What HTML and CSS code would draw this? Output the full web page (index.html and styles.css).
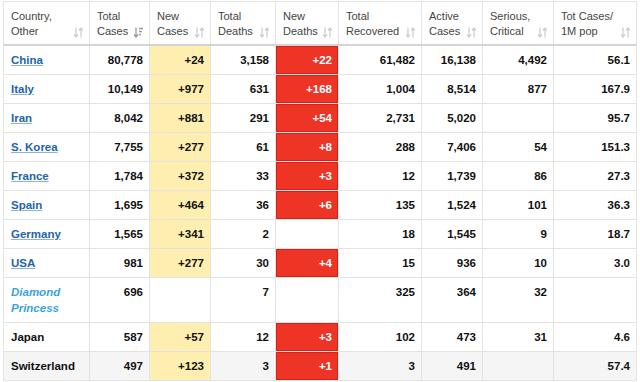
FILE: index.html
```html
<!DOCTYPE html>
<html lang="en">
<head>
    <meta charset="UTF-8">
    <title>Coronavirus Cases</title>
    <link rel="stylesheet" href="styles.css">
</head>
<body>

<table class="cases">
    <colgroup>
        <col class="c-country">
        <col class="c-total">
        <col class="c-new">
        <col class="c-deaths">
        <col class="c-newdeaths">
        <col class="c-recovered">
        <col class="c-active">
        <col class="c-serious">
        <col class="c-pop">
    </colgroup>
    <thead>
        <tr>
            <th><div class="head">Country,<br>Other<svg class="sort" viewBox="0 0 9 10"><path d="M2 0v9M0 7l2 2.5L4 7M7 10V1M5 3l2-2.5L9 3"/></svg></div></th>
            <th><div class="head">Total<br>Cases<svg class="sort active" viewBox="0 0 9 10"><path d="M2 0v9M0 7l2 2.5L4 7M5 1h4M5 4h3M5 7h2"/></svg></div></th>
            <th><div class="head">New<br>Cases<svg class="sort" viewBox="0 0 9 10"><path d="M2 0v9M0 7l2 2.5L4 7M7 10V1M5 3l2-2.5L9 3"/></svg></div></th>
            <th><div class="head">Total<br>Deaths<svg class="sort" viewBox="0 0 9 10"><path d="M2 0v9M0 7l2 2.5L4 7M7 10V1M5 3l2-2.5L9 3"/></svg></div></th>
            <th><div class="head">New<br>Deaths<svg class="sort" viewBox="0 0 9 10"><path d="M2 0v9M0 7l2 2.5L4 7M7 10V1M5 3l2-2.5L9 3"/></svg></div></th>
            <th><div class="head">Total<br>Recovered<svg class="sort" viewBox="0 0 9 10"><path d="M2 0v9M0 7l2 2.5L4 7M7 10V1M5 3l2-2.5L9 3"/></svg></div></th>
            <th><div class="head">Active<br>Cases<svg class="sort" viewBox="0 0 9 10"><path d="M2 0v9M0 7l2 2.5L4 7M7 10V1M5 3l2-2.5L9 3"/></svg></div></th>
            <th><div class="head">Serious,<br>Critical<svg class="sort" viewBox="0 0 9 10"><path d="M2 0v9M0 7l2 2.5L4 7M7 10V1M5 3l2-2.5L9 3"/></svg></div></th>
            <th><div class="head">Tot&nbsp;Cases/<br>1M pop<svg class="sort" viewBox="0 0 9 10"><path d="M2 0v9M0 7l2 2.5L4 7M7 10V1M5 3l2-2.5L9 3"/></svg></div></th>
        </tr>
    </thead>
    <tbody>
        <tr>
            <td><a href="#">China</a></td>
            <td>80,778</td>
            <td class="new">+24</td>
            <td>3,158</td>
            <td class="dead">+22</td>
            <td>61,482</td>
            <td>16,138</td>
            <td>4,492</td>
            <td>56.1</td>
        </tr>
        <tr>
            <td><a href="#">Italy</a></td>
            <td>10,149</td>
            <td class="new">+977</td>
            <td>631</td>
            <td class="dead">+168</td>
            <td>1,004</td>
            <td>8,514</td>
            <td>877</td>
            <td>167.9</td>
        </tr>
        <tr>
            <td><a href="#">Iran</a></td>
            <td>8,042</td>
            <td class="new">+881</td>
            <td>291</td>
            <td class="dead">+54</td>
            <td>2,731</td>
            <td>5,020</td>
            <td></td>
            <td>95.7</td>
        </tr>
        <tr>
            <td><a href="#">S. Korea</a></td>
            <td>7,755</td>
            <td class="new">+277</td>
            <td>61</td>
            <td class="dead">+8</td>
            <td>288</td>
            <td>7,406</td>
            <td>54</td>
            <td>151.3</td>
        </tr>
        <tr>
            <td><a href="#">France</a></td>
            <td>1,784</td>
            <td class="new">+372</td>
            <td>33</td>
            <td class="dead">+3</td>
            <td>12</td>
            <td>1,739</td>
            <td>86</td>
            <td>27.3</td>
        </tr>
        <tr>
            <td><a href="#">Spain</a></td>
            <td>1,695</td>
            <td class="new">+464</td>
            <td>36</td>
            <td class="dead">+6</td>
            <td>135</td>
            <td>1,524</td>
            <td>101</td>
            <td>36.3</td>
        </tr>
        <tr>
            <td><a href="#">Germany</a></td>
            <td>1,565</td>
            <td class="new">+341</td>
            <td>2</td>
            <td></td>
            <td>18</td>
            <td>1,545</td>
            <td>9</td>
            <td>18.7</td>
        </tr>
        <tr>
            <td><a href="#">USA</a></td>
            <td>981</td>
            <td class="new">+277</td>
            <td>30</td>
            <td class="dead">+4</td>
            <td>15</td>
            <td>936</td>
            <td>10</td>
            <td>3.0</td>
        </tr>
        <tr class="tall">
            <td><span class="ship">Diamond Princess</span></td>
            <td>696</td>
            <td></td>
            <td>7</td>
            <td></td>
            <td>325</td>
            <td>364</td>
            <td>32</td>
            <td></td>
        </tr>
        <tr>
            <td>Japan</td>
            <td>587</td>
            <td class="new">+57</td>
            <td>12</td>
            <td class="dead">+3</td>
            <td>102</td>
            <td>473</td>
            <td>31</td>
            <td>4.6</td>
        </tr>
        <tr class="hover">
            <td>Switzerland</td>
            <td>497</td>
            <td class="new">+123</td>
            <td>3</td>
            <td class="dead">+1</td>
            <td>3</td>
            <td>491</td>
            <td></td>
            <td>57.4</td>
        </tr>
    </tbody>
</table>

</body>
</html>
```

FILE: styles.css
```css
* {
    box-sizing: border-box;
}

body {
    margin: 0;
    padding: 1px 0 0 3px;
    background: #fff;
    font-family: 'Liberation Sans', Arial, sans-serif;
    color: #111;
}

.cases {
    border-collapse: collapse;
    table-layout: fixed;
    width: 633px;
}

.c-country { width: 86px; }
.c-total { width: 60px; }
.c-new { width: 61px; }
.c-deaths { width: 65px; }
.c-newdeaths { width: 63px; }
.c-recovered { width: 83px; }
.c-active { width: 61px; }
.c-serious { width: 71px; }
.c-pop { width: 83px; }

th, td {
    border: 1px solid #e3e3e3;
}

th {
    height: 43px;
    padding: 7px 6px 5px 7px;
    border-bottom: 2px solid #d4d4d4;
    font-size: 11px;
    font-weight: normal;
    line-height: 15px;
    color: #444;
    text-align: left;
    vertical-align: top;
}

.head {
    position: relative;
    padding-right: 12px;
    white-space: nowrap;
}

.sort {
    position: absolute;
    right: 0;
    bottom: 1px;
    width: 9px;
    height: 11px;
    fill: none;
    stroke: #cfcfcf;
    stroke-width: 1.3;
}

.sort.active {
    stroke: #999;
}

td {
    height: 29px;
    padding: 6px 6px 6px 7px;
    font-size: 11.5px;
    font-weight: bold;
    line-height: 16px;
    text-align: right;
    vertical-align: top;
}

td:first-child {
    text-align: left;
}

td a {
    color: #2364ad;
    text-decoration: underline;
    text-decoration-color: #8fb2d8;
}

.ship {
    color: #3aa2e4;
    font-style: italic;
}

.tall td {
    height: 43px;
}

.hover td {
    background: #f5f5f5;
}

td.new,
.hover td.new {
    background: #feeeb0;
}

td.dead,
.hover td.dead {
    background: #ee3424;
    color: #fff;
    box-shadow: inset 0 0 0 1px #d81f1a;
}
```
